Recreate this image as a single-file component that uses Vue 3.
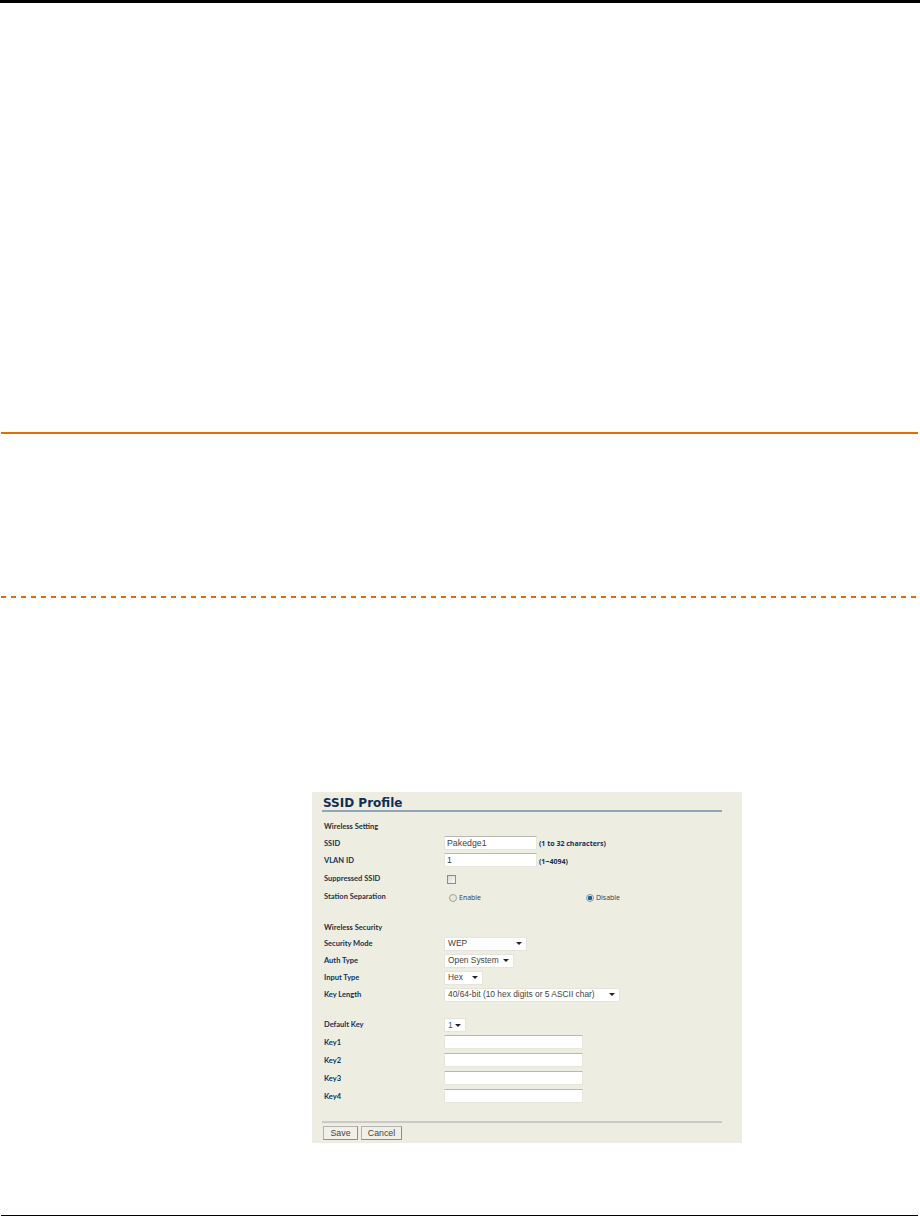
<template>
  <div class="page">
    <div class="top-bar"></div>
    <div class="rule-solid"></div>
    <div class="rule-dashed"></div>

    <div class="panel">
      <h1 class="title">SSID Profile</h1>

      <div class="section-head first">Wireless Setting</div>
      <div class="row tight">
        <label>SSID</label>
        <input class="text short" type="text" value="Pakedge1" />
        <span class="hint">(1 to 32 characters)</span>
      </div>
      <div class="row">
        <label>VLAN ID</label>
        <input class="text short" type="text" value="1" />
        <span class="hint">(1~4094)</span>
      </div>
      <div class="row">
        <label class="soft">Suppressed SSID</label>
        <span class="check"></span>
      </div>
      <div class="row">
        <label class="soft">Station Separation</label>
        <div class="radios">
          <span class="radio-item enable"><span class="radio"></span>Enable</span>
          <span class="radio-item"><span class="radio on"></span>Disable</span>
        </div>
      </div>

      <div class="section-head second">Wireless Security</div>
      <div class="row" v-for="s in selects" :key="s.label">
        <label>{{ s.label }}</label>
        <div class="select" :style="{ width: s.width + 'px' }">
          <span>{{ s.value }}</span><i class="caret"></i>
        </div>
      </div>

      <div class="row default-key">
        <label>Default Key</label>
        <div class="select num" style="width: 22px"><span>1</span><i class="caret"></i></div>
      </div>
      <div class="row key" v-for="k in keys" :key="k">
        <label>{{ k }}</label>
        <input class="text long" type="text" />
      </div>

      <div class="footer">
        <button class="btn save">Save</button>
        <button class="btn cancel">Cancel</button>
      </div>
    </div>

    <div class="rule-bottom"></div>
  </div>
</template>

<script setup>
const selects = [
  { label: 'Security Mode', value: 'WEP', width: 83 },
  { label: 'Auth Type', value: 'Open System', width: 70 },
  { label: 'Input Type', value: 'Hex', width: 39 },
  { label: 'Key Length', value: '40/64-bit (10 hex digits or 5 ASCII char)', width: 176 }
]
const keys = ['Key1', 'Key2', 'Key3', 'Key4']
</script>

<style>
html, body {
  margin: 0;
  background: #fff;
}
</style>

<style scoped>
.page {
  width: 920px;
  height: 1216px;
  overflow: hidden;
  background: #fff;
  font-family: "Liberation Sans", Arial, sans-serif;
}

.top-bar {
  height: 3px;
  background: #000;
}

.rule-solid {
  height: 2px;
  margin: 429px 2px 0 1px;
  background: #e36c0a;
}

.rule-dashed {
  height: 2px;
  margin: 162px 2px 0 1px;
  background: repeating-linear-gradient(to right, #e36c0a 0 5px, transparent 5px 10px);
}

.panel {
  box-sizing: border-box;
  width: 430px;
  height: 351px;
  margin: 194px 0 0 312px;
  padding: 0 20px 0 10px;
  background: #eeede2;
}

.title {
  margin: 0;
  height: 16px;
  padding: 2px 0 0 1px;
  box-sizing: content-box;
  border-bottom: 2px solid #8fa6bf;
  font: bold 12px/18px "DejaVu Sans", Verdana, sans-serif;
  color: #0f2f57;
}

.section-head {
  height: 17px;
  padding-left: 2px;
  font: bold 7.5px/17px Lato, Tahoma, sans-serif;
  color: #2a2f36;
}

.section-head.first {
  margin-top: 6px;
}

.section-head.second {
  height: 15px;
  margin-top: 14px;
  line-height: 15px;
}

.row {
  display: flex;
  align-items: center;
  height: 18px;
  padding-left: 2px;
}

.row.tight {
  height: 17px;
}

.section-head.second ~ .row:not(.default-key):not(.key) {
  height: 17px;
}

.row.default-key {
  margin-top: 13px;
}

label {
  flex: none;
  width: 120px;
  font: bold 7.5px/1 Lato, Tahoma, sans-serif;
  color: #10305a;
}

label.soft {
  color: #26344a;
}

.text {
  box-sizing: border-box;
  height: 14px;
  margin-bottom: 2px;
  padding: 0 2px;
  border: 1px solid #e6e6de;
  border-top-color: #b8b8b2;
  background: #fff;
  font: 8.8px "Liberation Sans", Arial, sans-serif;
  color: #444;
  outline: none;
}

.text.short {
  width: 93px;
}

.text.long {
  width: 139px;
}

.hint {
  margin-left: 2px;
  font: bold 7px/1 "Open Sans", Tahoma, sans-serif;
  color: #10305a;
}

.check {
  width: 7px;
  height: 7px;
  margin-left: 3px;
  border: 1px solid #8c8c8c;
  background: linear-gradient(135deg, #d8d8d4, #fafaf8);
}

.radios {
  display: flex;
  align-items: center;
  margin-left: 5px;
}

.radio-item {
  display: flex;
  align-items: center;
  font: 7px/1 "Open Sans", Tahoma, sans-serif;
  color: #2a3a50;
  padding-top: 1px;
}

.radio-item.enable {
  width: 137px;
}

.radio {
  box-sizing: border-box;
  width: 8px;
  height: 8px;
  margin-right: 2px;
  border: 1px solid #a4a49c;
  border-radius: 50%;
  background: #e8e8e0;
}

.radio.on {
  background: radial-gradient(circle, #15649c 0 2px, #dfe6ea 2.5px);
  border-color: #8a9aa8;
}

.select {
  box-sizing: border-box;
  display: flex;
  align-items: center;
  justify-content: space-between;
  height: 14px;
  padding: 0 4px 0 3px;
  border: 1px solid #e4e4dc;
  background: #fff;
  font: 8.4px/1 "Liberation Sans", Arial, sans-serif;
  color: #444;
  white-space: nowrap;
}

.select.num {
  color: #1f5f9f;
}

.caret {
  flex: none;
  width: 0;
  height: 0;
  border-left: 3px solid transparent;
  border-right: 3px solid transparent;
  border-top: 3px solid #222;
}

.footer {
  margin-top: 15px;
  padding: 3px 0 0 1px;
  display: flex;
  gap: 3px;
  border-top: 2px solid #c8cac8;
}

.btn {
  box-sizing: border-box;
  height: 14px;
  padding: 0;
  border: 1px solid #8e8e88;
  border-top-color: #b4b4ae;
  border-left-color: #b4b4ae;
  background: #f0efe8;
  font: 8.8px/1 "Liberation Sans", Arial, sans-serif;
  color: #444;
}

.btn.save {
  width: 35px;
}

.btn.cancel {
  width: 41px;
}

.rule-bottom {
  height: 1px;
  margin: 72px 2px 0 1px;
  background: #000;
}
</style>
